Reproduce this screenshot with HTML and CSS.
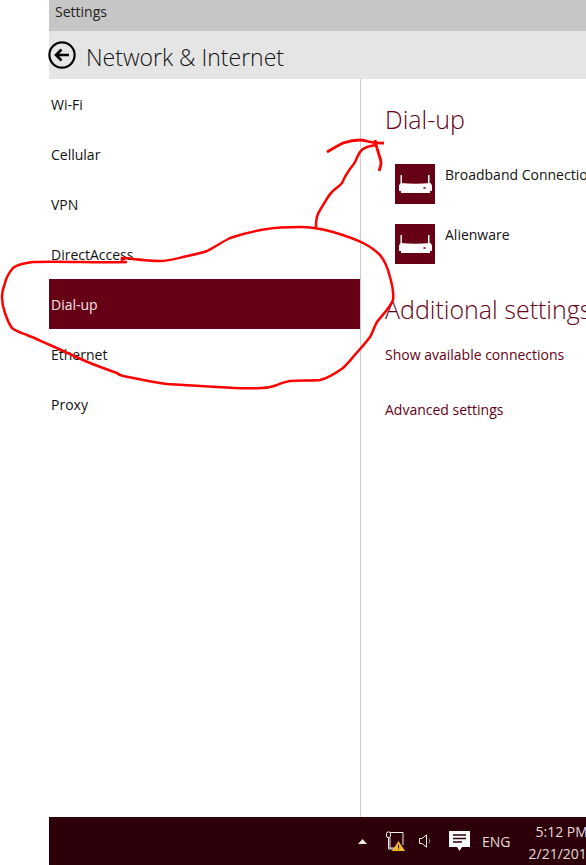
FILE: index.html
```html
<!DOCTYPE html>
<html lang="en">
<head>
    <meta charset="UTF-8">
    <title>Settings</title>
    <link rel="stylesheet" href="styles.css">
</head>
<body>
    <div class="app">
        <div class="titlebar">Settings</div>
        <div class="header">
            <svg class="back" width="30" height="30" viewBox="0 0 30 30">
                <circle cx="14" cy="15" r="12.6" fill="none" stroke="#000" stroke-width="2.2"/>
                <path d="M21 15H8M13.5 9.5L8 15l5.5 5.5" fill="none" stroke="#000" stroke-width="2.6"/>
            </svg>
            <h1>Network &amp; Internet</h1>
        </div>
        <div class="main">
            <ul class="nav">
                <li>Wi-Fi</li>
                <li>Cellular</li>
                <li>VPN</li>
                <li>DirectAccess</li>
                <li class="active">Dial-up</li>
                <li>Ethernet</li>
                <li>Proxy</li>
            </ul>
            <div class="content">
                <h2>Dial-up</h2>
                <div class="conn">
                    <svg class="router" width="40" height="40" viewBox="0 0 40 40">
                        <rect width="40" height="40" fill="#660014"/>
                        <path d="M5.500 11H7v8H5.500zM33 11h1.500v8H33z" fill="#fff"/>
                        <path d="M4 21.500l1.500-2.500c9.500 1 20.500 1 30 0l1.500 2.500V27h-2v2H6v-2H4z" fill="#fff"/>
                        <rect x="28.500" y="23" width="2" height="2" fill="#8c3040"/>
                    </svg>
                    <span>Broadband Connection</span>
                </div>
                <div class="conn">
                    <svg class="router" width="40" height="40" viewBox="0 0 40 40">
                        <rect width="40" height="40" fill="#660014"/>
                        <path d="M5.500 11H7v8H5.500zM33 11h1.500v8H33z" fill="#fff"/>
                        <path d="M4 21.500l1.500-2.500c9.500 1 20.500 1 30 0l1.500 2.500V27h-2v2H6v-2H4z" fill="#fff"/>
                        <rect x="28.500" y="23" width="2" height="2" fill="#8c3040"/>
                    </svg>
                    <span>Alienware</span>
                </div>
                <h2 class="more">Additional settings</h2>
                <a class="link">Show available connections</a>
                <a class="link">Advanced settings</a>
            </div>
        </div>
        <div class="taskbar">
            <svg class="tray-up" width="9" height="5" viewBox="0 0 9 5"><path d="M0 5L4.500 0 9 5z" fill="#eee"/></svg>
            <svg class="tray-net" width="20" height="20" viewBox="0 0 20 20">
                <path d="M5 1.500H18V14M5 7V17H12M3.500 7V18M3.500 18H9" fill="none" stroke="#eee" stroke-width="1"/>
                <rect x="1.500" y="1" width="4" height="5.500" rx="1.500" fill="#2d0009" stroke="#eee"/>
                <path d="M13.500 10L20 20H7z" fill="#f5b82e"/>
                <path d="M13 13.500h1v3.500h-1zM13 17.800h1v1h-1z" fill="#222"/>
            </svg>
            <svg class="tray-vol" width="13" height="14" viewBox="0 0 13 14">
                <path d="M.5 4.500H3L7.500.8v12.400L3 9.500H.5z" fill="none" stroke="#eee"/>
                <path d="M10 4.500c1 1.500 1 3.500 0 5" fill="none" stroke="#999"/>
            </svg>
            <svg class="tray-msg" width="21" height="21" viewBox="0 0 21 21">
                <path d="M0 0H21V16H13L10.500 20 8 16H0z" fill="#fff"/>
                <path d="M4 4H17M4 7.500H17M4 11H13" stroke="#2d0009" stroke-width="1.600"/>
            </svg>
            <span class="lang">ENG</span>
            <div class="clock">
                <span>5:12 PM</span>
                <span>2/21/2016</span>
            </div>
        </div>
    </div>

    <!-- red pen marks drawn on top of the screenshot -->
    <svg class="ink" width="586" height="865" viewBox="0 0 586 865">
        <path d="M127 262C100 263 60 261 33 262C24 263 17 265 13 268C8 274 6 278 5 283C3 288 2 292 2 297C2 303 3 308 5 313C7 319 9 324 12 328C17 332 22 333 27 335C35 338 43 342 50 345C61 350 72 355 83 360C94 365 106 369 117 373C119 375 121 375 123 376C138 379 152 382 167 384C184 385 200 386 217 387C231 388 246 389 260 388C266 388 272 387 277 385C281 383 285 382 290 381C300 380 310 381 320 380C329 378 336 373 343 368C347 364 350 361 353 357C359 350 365 344 370 337C373 332 374 327 377 322C382 315 390 308 393 300C394 292 392 284 390 277C388 269 385 261 380 255C375 250 369 246 363 243C353 238 343 235 333 232C322 229 311 227 300 227C289 227 278 227 267 229C254 231 242 234 230 238C222 242 215 247 207 251C199 254 191 255 183 257C175 259 168 261 160 261C151 261 142 260 133 259C129 258 125 258 122 258L122 262" fill="none" stroke="#f00" stroke-width="2.500"/>
        <path d="M316 228C316 223 316 220 317 217C318 212 321 209 323 205C326 201 328 196 331 193C334 189 339 187 342 183C344 179 345 176 348 172C350 168 353 166 355 162C357 158 358 155 360 152C362 149 364 148 367 147C370 146 372 146 375 145" fill="none" stroke="#f00" stroke-width="2.500"/>
        <path d="M327 152C332 149 337 146 343 143C349 141 354 140 360 140C366 140 372 144 384 143" fill="none" stroke="#f00" stroke-width="2.800"/>
        <path d="M375 140C376 146 378 151 379 155C380 158 381 160 381 163C381 166 380 168 379 171" fill="none" stroke="#f00" stroke-width="2.800"/>
    </svg>
</body>
</html>
```

FILE: styles.css
```css
*{
    margin: 0px;
    padding: 0px;
    box-sizing: border-box;
    font-family: "Open Sans", "Noto Sans", sans-serif;
}
html, body{
    height: 100%;
    overflow: hidden;
    background: white;
}
.app{
    display: flex;
    flex-direction: column;
    width: 600px;
    height: 865px;
    margin-left: 49px;
}
.titlebar{
    height: 31px;
    padding: 2px 0 0 6px;
    background: #c6c6c6;
    color: #222;
    font-size: 14px;
}
.header{
    display: flex;
    align-items: center;
    height: 48px;
    background: #e5e5e5;
}
.back{
    margin-left: -1px;
    margin-right: 8px;
}
h1{
    padding-top: 3px;
    font-size: 23px;
    font-weight: 300;
    color: #111;
}
.main{
    flex: 1;
    display: flex;
    min-height: 0;
}
.nav{
    width: 312px;
    list-style: none;
    border-right: 1px solid #ccc;
}
.nav li{
    display: flex;
    align-items: center;
    width: 311px;
    height: 50px;
    padding-left: 2px;
    font-size: 14px;
    color: #111;
}
.nav li.active{
    background: #660014;
    color: #f2e6e8;
}
.content{
    flex: 1;
    padding: 20px 0 0 24px;
}
h2{
    font-size: 25px;
    font-weight: 300;
    line-height: 40px;
    color: #660014;
    white-space: nowrap;
}
.conn{
    display: flex;
    align-items: flex-start;
    gap: 10px;
    height: 40px;
    margin: 0 0 20px 10px;
    font-size: 14px;
    color: #111;
    white-space: nowrap;
}
.conn:first-of-type{
    margin-top: 25px;
}
.conn span{
    margin-top: 1px;
}
.more{
    margin-top: 25px;
    margin-bottom: 14px;
}
.link{
    display: block;
    height: 55px;
    padding-top: 2px;
    font-size: 14px;
    color: #660014;
    white-space: nowrap;
}
.taskbar{
    display: flex;
    align-items: center;
    height: 48px;
    padding-left: 309px;
    background: #2d0009;
    color: #e6dcdd;
}
.tray-up{
    margin-right: 18px;
}
.tray-net{
    margin-right: 14px;
}
.tray-vol{
    margin-right: 17px;
}
.tray-msg{
    margin-right: 12px;
}
.lang{
    font-size: 14px;
    margin-right: 18px;
}
.clock{
    display: flex;
    flex-direction: column;
    align-items: center;
    padding-top: 4px;
    font-size: 14px;
    line-height: 22px;
    white-space: nowrap;
}
.ink{
    position: absolute;
    left: 0;
    top: 0;
    pointer-events: none;
}
```
